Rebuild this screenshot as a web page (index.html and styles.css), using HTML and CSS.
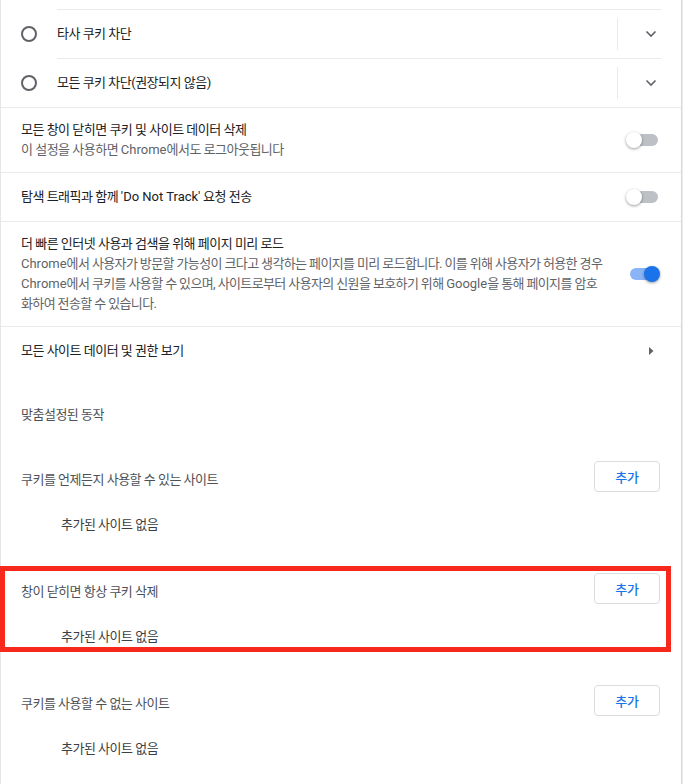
FILE: index.html
```html
<!DOCTYPE html>
<html lang="ko">
<head>
<meta charset="utf-8">
<link rel="stylesheet" href="styles.css">
</head>
<body>
<div class="card">
  <div class="radio-group">
    <div class="radio-row">
      <span class="radio"></span>
      <div class="radio-body">
        <span class="label">타사 쿠키 차단</span>
        <span class="vdiv"></span>
        <span class="expand"><svg width="12" height="8" viewBox="0 0 12 8"><polyline points="1.5,1.5 6,6 10.5,1.5" fill="none" stroke="#5f6368" stroke-width="1.6"/></svg></span>
      </div>
    </div>
    <div class="radio-row">
      <span class="radio"></span>
      <div class="radio-body">
        <span class="label">모든 쿠키 차단(권장되지 않음)</span>
        <span class="vdiv"></span>
        <span class="expand"><svg width="12" height="8" viewBox="0 0 12 8"><polyline points="1.5,1.5 6,6 10.5,1.5" fill="none" stroke="#5f6368" stroke-width="1.6"/></svg></span>
      </div>
    </div>
  </div>

  <div class="row multi">
    <div class="text">
      <div class="title">모든 창이 닫히면 쿠키 및 사이트 데이터 삭제</div>
      <div class="sub">이 설정을 사용하면 <span class="en">Chrome</span>에서도 로그아웃됩니다</div>
    </div>
    <span class="toggle"><span class="track"></span><span class="knob"></span></span>
  </div>

  <div class="row">
    <div class="text">
      <div class="title">탐색 트래픽과 함께 <span class="en">'Do Not Track'</span> 요청 전송</div>
    </div>
    <span class="toggle"><span class="track"></span><span class="knob"></span></span>
  </div>

  <div class="row multi">
    <div class="text">
      <div class="title">더 빠른 인터넷 사용과 검색을 위해 페이지 미리 로드</div>
      <div class="sub long"><span class="en">Chrome</span>에서 사용자가 방문할 가능성이 크다고 생각하는 페이지를 미리 로드합니다. 이를 위해 사용자가 허용한 경우<br><span class="en">Chrome</span>에서 쿠키를 사용할 수 있으며, 사이트로부터 사용자의 신원을 보호하기 위해 <span class="en">Google</span>을 통해 페이지를 암호<br>화하여 전송할 수 있습니다.</div>
    </div>
    <span class="toggle on"><span class="track"></span><span class="knob"></span></span>
  </div>

  <div class="row">
    <div class="text">
      <div class="title">모든 사이트 데이터 및 권한 보기</div>
    </div>
    <span class="arrow"><svg width="5" height="8" viewBox="0 0 5 8"><polygon points="0,0 4.5,4 0,8" fill="#5f6368"/></svg></span>
  </div>

  <div class="heading">맞춤설정된 동작</div>

  <div class="site-list">
    <div class="site-head">
      <span class="site-label">쿠키를 언제든지 사용할 수 있는 사이트</span>
      <button class="add">추가</button>
    </div>
    <div class="site-empty">추가된 사이트 없음</div>
  </div>

  <div class="site-list marked">
    <div class="site-head">
      <span class="site-label">창이 닫히면 항상 쿠키 삭제</span>
      <button class="add">추가</button>
    </div>
    <div class="site-empty">추가된 사이트 없음</div>
    <div class="highlight"></div>
  </div>

  <div class="site-list">
    <div class="site-head">
      <span class="site-label">쿠키를 사용할 수 없는 사이트</span>
      <button class="add">추가</button>
    </div>
    <div class="site-empty">추가된 사이트 없음</div>
  </div>
</div>
</body>
</html>
```

FILE: styles.css
```css
* { box-sizing: border-box; }
html, body { margin: 0; padding: 0; background: #fff; }
body {
  font-family: Roboto, "Noto Sans CJK KR", sans-serif;
  font-size: 13px;
  letter-spacing: -0.5px;
  color: #202124;
  line-height: 20px;
}
.en { letter-spacing: 0; }
.card {
  width: 682px;
  min-height: 784px;
  border-left: 1px solid #e6e6e6;
  border-right: 1px solid #d8d8d8;
  box-shadow: 1px 0 0 #ededed;
  background: #fff;
}
.radio-group { padding-top: 9px; }
.radio-row {
  display: flex;
  align-items: center;
  padding: 0 20px;
}
.radio {
  width: 16px;
  height: 16px;
  border: 2px solid #5f6368;
  border-radius: 50%;
  flex: none;
  margin-right: 20px;
}
.radio-body {
  flex: 1;
  display: flex;
  align-items: center;
  height: 49px;
  border-top: 1px solid #e8eaed;
}
.radio-body .label { flex: 1; }
.vdiv {
  width: 1px;
  height: 32px;
  background: #e8eaed;
  margin-right: 23px;
}
.expand {
  width: 20px;
  display: flex;
  justify-content: center;
}
.expand svg { display: block; }
.row {
  display: flex;
  align-items: center;
  min-height: 49px;
  padding: 0 20px;
  border-top: 1px solid #e8eaed;
}
.row.multi { padding-top: 12px; padding-bottom: 12px; }
.text { flex: 1; min-width: 0; margin-right: 20px; }
.sub { color: #5f6368; }
.sub.long { white-space: nowrap; letter-spacing: -0.62px; }
.sub.long .en { letter-spacing: 0; }
.toggle {
  position: relative;
  width: 34px;
  height: 16px;
  flex: none;
  margin-right: 1px;
}
.toggle .track {
  position: absolute;
  left: 1px;
  right: 2px;
  top: 2px;
  height: 12px;
  border-radius: 6px;
  background: #bdc1c6;
}
.toggle .knob {
  position: absolute;
  left: 0;
  top: 0;
  width: 16px;
  height: 16px;
  border-radius: 50%;
  background: #fff;
  box-shadow: 0 1px 3px rgba(0,0,0,0.4);
}
.toggle.on .track { background: #8ab4f8; left: 4px; right: 4px; }
.toggle.on .knob { left: 18px; background: #1a73e8; }
.arrow {
  width: 20px;
  display: flex;
  justify-content: center;
}
.arrow svg { display: block; }
.heading {
  padding: 30px 20px 0;
  color: #4d5156;
  margin-bottom: 36px;
}
.site-list {
  padding: 0 20px 38px;
}
.site-list.marked { position: relative; }
.site-head {
  display: flex;
  align-items: flex-start;
  justify-content: space-between;
}
.site-label {
  color: #4d5156;
  padding-top: 9px;
}
.add {
  width: 66px;
  height: 31px;
  margin-right: 1px;
  border: 1px solid #dadce0;
  border-radius: 4px;
  background: #fff;
  color: #1a73e8;
  font-family: Roboto, "Noto Sans CJK KR", sans-serif;
  font-size: 13px;
  font-weight: 500;
  letter-spacing: -0.3px;
  padding: 0;
}
.site-empty {
  margin-top: 23px;
  padding-left: 40px;
  color: #3c4043;
}
.highlight {
  position: absolute;
  left: -1px;
  top: -7px;
  width: 671px;
  height: 86px;
  border: 5px solid #f6291c;
  pointer-events: none;
}
```
